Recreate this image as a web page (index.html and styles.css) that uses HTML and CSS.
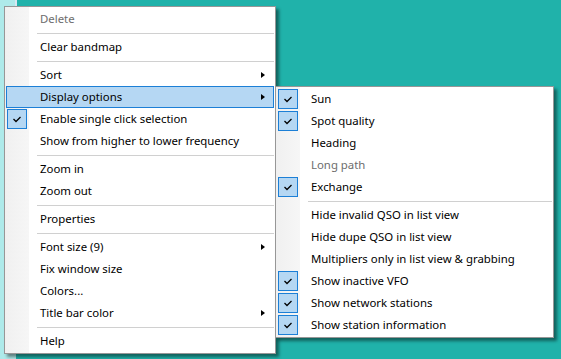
FILE: index.html
```html
<html>
    <head>
        <link rel="stylesheet" href="styles.css">
    </head>
    <body>
        <div class="desk">
            <div class="menu main">
                <div class="item off"><span class="mark"></span><span class="label">Delete</span></div>
                <div class="sep"></div>
                <div class="item"><span class="mark"></span><span class="label">Clear bandmap</span></div>
                <div class="sep"></div>
                <div class="item"><span class="mark"></span><span class="label">Sort</span><span class="arrow"></span></div>
                <div class="item hot"><span class="mark"></span><span class="label">Display options</span><span class="arrow"></span></div>
                <div class="item"><span class="mark on"><svg width="18" height="18" viewBox="0 0 18 18"><polyline points="5.5,9 8,11.5 12.5,7"/></svg></span><span class="label">Enable single click selection</span></div>
                <div class="item"><span class="mark"></span><span class="label">Show from higher to lower frequency</span></div>
                <div class="sep"></div>
                <div class="item"><span class="mark"></span><span class="label">Zoom in</span></div>
                <div class="item"><span class="mark"></span><span class="label">Zoom out</span></div>
                <div class="sep"></div>
                <div class="item"><span class="mark"></span><span class="label">Properties</span></div>
                <div class="sep"></div>
                <div class="item"><span class="mark"></span><span class="label">Font size (9)</span><span class="arrow"></span></div>
                <div class="item"><span class="mark"></span><span class="label">Fix window size</span></div>
                <div class="item"><span class="mark"></span><span class="label">Colors...</span></div>
                <div class="item"><span class="mark"></span><span class="label">Title bar color</span><span class="arrow"></span></div>
                <div class="sep"></div>
                <div class="item"><span class="mark"></span><span class="label">Help</span></div>
            </div>

            <div class="menu sub">
                <div class="item"><span class="mark on"><svg width="18" height="18" viewBox="0 0 18 18"><polyline points="5.5,9 8,11.5 12.5,7"/></svg></span><span class="label">Sun</span></div>
                <div class="item"><span class="mark on"><svg width="18" height="18" viewBox="0 0 18 18"><polyline points="5.5,9 8,11.5 12.5,7"/></svg></span><span class="label">Spot quality</span></div>
                <div class="item"><span class="mark"></span><span class="label">Heading</span></div>
                <div class="item off"><span class="mark"></span><span class="label">Long path</span></div>
                <div class="item"><span class="mark on"><svg width="18" height="18" viewBox="0 0 18 18"><polyline points="5.5,9 8,11.5 12.5,7"/></svg></span><span class="label">Exchange</span></div>
                <div class="sep"></div>
                <div class="item"><span class="mark"></span><span class="label">Hide invalid QSO in list view</span></div>
                <div class="item"><span class="mark"></span><span class="label">Hide dupe QSO in list view</span></div>
                <div class="item"><span class="mark"></span><span class="label">Multipliers only in list view &amp; grabbing</span></div>
                <div class="item"><span class="mark on"><svg width="18" height="18" viewBox="0 0 18 18"><polyline points="5.5,9 8,11.5 12.5,7"/></svg></span><span class="label">Show inactive VFO</span></div>
                <div class="item"><span class="mark on"><svg width="18" height="18" viewBox="0 0 18 18"><polyline points="5.5,9 8,11.5 12.5,7"/></svg></span><span class="label">Show network stations</span></div>
                <div class="item"><span class="mark on"><svg width="18" height="18" viewBox="0 0 18 18"><polyline points="5.5,9 8,11.5 12.5,7"/></svg></span><span class="label">Show station information</span></div>
            </div>
        </div>
    </body>
</html>
```

FILE: styles.css
```css
body {
    margin: 0;
    background: #20b2aa;
}

.desk {
    position: relative;
    width: 561px;
    height: 359px;
    overflow: hidden;
    background:
        linear-gradient(to right, #aeeaea 0, #aeeaea 15px, #d8e6f2 15px, #d8e6f2 17px, transparent 17px) top left / 100% 6px no-repeat,
        linear-gradient(to right, #aeeaea 0, #aeeaea 16px, #20b2aa 16px);
    font-family: "Noto Sans", sans-serif;
    font-size: 11.4px;
    color: #000;
}

/* the two popup menus sit over the desktop */
.menu {
    position: absolute;
    border: 1px solid #979797;
    padding: 1px;
    background: linear-gradient(to right, #f0f0f0 0, #f6f6f6 24px, #fff 24px);
    box-shadow: 3px 3px 3px rgba(0, 0, 0, 0.45);
}

.main {
    left: 4px;
    top: 6px;
    width: 268px;
}

.sub {
    left: 275px;
    top: 86px;
    width: 275px;
}

.item {
    display: flex;
    align-items: center;
    height: 22px;
    padding-left: 1px;
    box-sizing: border-box;
    white-space: nowrap;
}

.item.hot {
    background: #b5d7f3;
    border: 1px solid #1c7fd6;
    padding-left: 0;
}

.item.off {
    color: #6d6d6d;
}

.mark {
    width: 20px;
    height: 20px;
    margin-right: 13px;
    box-sizing: border-box;
    flex: none;
}

.mark.on {
    background: #b5d7f3;
    border: 1px solid #1c7fd6;
}

.mark svg {
    display: block;
    fill: none;
    stroke: #000;
    stroke-width: 1.3;
}

.label {
    flex: 1;
    padding-bottom: 2px;
}

.arrow {
    width: 0;
    height: 0;
    margin-right: 9px;
    border-left: 4px solid #000;
    border-top: 3.5px solid transparent;
    border-bottom: 3.5px solid transparent;
}

.item.hot .arrow {
    margin-right: 8px;
}

.sep {
    height: 6px;
    padding-top: 3px;
    box-sizing: border-box;
}

.sep::after {
    content: "";
    display: block;
    height: 1px;
    margin-left: 31px;
    background: #d0d0d0;
}
```
